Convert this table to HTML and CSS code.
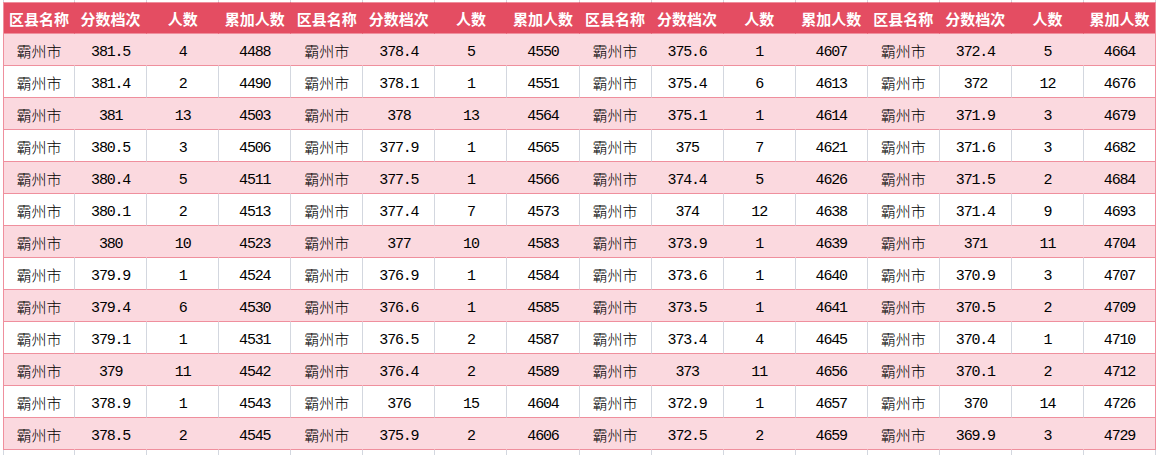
FILE: index.html
```html
<!DOCTYPE html>
<html lang="zh-CN">
<head>
<meta charset="utf-8">
<title>霸州市 分数档次</title>
<link rel="stylesheet" href="styles.css">
</head>
<body>
<table class="sheet">
<colgroup>
<col class="c"><col class="c"><col class="c"><col class="c"><col class="c"><col class="c"><col class="c"><col class="c">
<col class="c"><col class="c"><col class="c"><col class="c"><col class="c"><col class="c"><col class="c"><col class="c">
</colgroup>
<tbody>
<tr class="gap"><td></td><td></td><td></td><td></td><td></td><td></td><td></td><td></td><td></td><td></td><td></td><td></td><td></td><td></td><td></td><td></td></tr>
<tr class="head"><td>区县名称</td><td>分数档次</td><td>人数</td><td>累加人数</td><td>区县名称</td><td>分数档次</td><td>人数</td><td>累加人数</td><td>区县名称</td><td>分数档次</td><td>人数</td><td>累加人数</td><td>区县名称</td><td>分数档次</td><td>人数</td><td>累加人数</td></tr>
<tr class="pink"><td>霸州市</td><td class="n">381.5</td><td class="n">4</td><td class="n">4488</td><td>霸州市</td><td class="n">378.4</td><td class="n">5</td><td class="n">4550</td><td>霸州市</td><td class="n">375.6</td><td class="n">1</td><td class="n">4607</td><td>霸州市</td><td class="n">372.4</td><td class="n">5</td><td class="n">4664</td></tr>
<tr class="white"><td>霸州市</td><td class="n">381.4</td><td class="n">2</td><td class="n">4490</td><td>霸州市</td><td class="n">378.1</td><td class="n">1</td><td class="n">4551</td><td>霸州市</td><td class="n">375.4</td><td class="n">6</td><td class="n">4613</td><td>霸州市</td><td class="n">372</td><td class="n">12</td><td class="n">4676</td></tr>
<tr class="pink"><td>霸州市</td><td class="n">381</td><td class="n">13</td><td class="n">4503</td><td>霸州市</td><td class="n">378</td><td class="n">13</td><td class="n">4564</td><td>霸州市</td><td class="n">375.1</td><td class="n">1</td><td class="n">4614</td><td>霸州市</td><td class="n">371.9</td><td class="n">3</td><td class="n">4679</td></tr>
<tr class="white"><td>霸州市</td><td class="n">380.5</td><td class="n">3</td><td class="n">4506</td><td>霸州市</td><td class="n">377.9</td><td class="n">1</td><td class="n">4565</td><td>霸州市</td><td class="n">375</td><td class="n">7</td><td class="n">4621</td><td>霸州市</td><td class="n">371.6</td><td class="n">3</td><td class="n">4682</td></tr>
<tr class="pink"><td>霸州市</td><td class="n">380.4</td><td class="n">5</td><td class="n">4511</td><td>霸州市</td><td class="n">377.5</td><td class="n">1</td><td class="n">4566</td><td>霸州市</td><td class="n">374.4</td><td class="n">5</td><td class="n">4626</td><td>霸州市</td><td class="n">371.5</td><td class="n">2</td><td class="n">4684</td></tr>
<tr class="white"><td>霸州市</td><td class="n">380.1</td><td class="n">2</td><td class="n">4513</td><td>霸州市</td><td class="n">377.4</td><td class="n">7</td><td class="n">4573</td><td>霸州市</td><td class="n">374</td><td class="n">12</td><td class="n">4638</td><td>霸州市</td><td class="n">371.4</td><td class="n">9</td><td class="n">4693</td></tr>
<tr class="pink"><td>霸州市</td><td class="n">380</td><td class="n">10</td><td class="n">4523</td><td>霸州市</td><td class="n">377</td><td class="n">10</td><td class="n">4583</td><td>霸州市</td><td class="n">373.9</td><td class="n">1</td><td class="n">4639</td><td>霸州市</td><td class="n">371</td><td class="n">11</td><td class="n">4704</td></tr>
<tr class="white"><td>霸州市</td><td class="n">379.9</td><td class="n">1</td><td class="n">4524</td><td>霸州市</td><td class="n">376.9</td><td class="n">1</td><td class="n">4584</td><td>霸州市</td><td class="n">373.6</td><td class="n">1</td><td class="n">4640</td><td>霸州市</td><td class="n">370.9</td><td class="n">3</td><td class="n">4707</td></tr>
<tr class="pink"><td>霸州市</td><td class="n">379.4</td><td class="n">6</td><td class="n">4530</td><td>霸州市</td><td class="n">376.6</td><td class="n">1</td><td class="n">4585</td><td>霸州市</td><td class="n">373.5</td><td class="n">1</td><td class="n">4641</td><td>霸州市</td><td class="n">370.5</td><td class="n">2</td><td class="n">4709</td></tr>
<tr class="white"><td>霸州市</td><td class="n">379.1</td><td class="n">1</td><td class="n">4531</td><td>霸州市</td><td class="n">376.5</td><td class="n">2</td><td class="n">4587</td><td>霸州市</td><td class="n">373.4</td><td class="n">4</td><td class="n">4645</td><td>霸州市</td><td class="n">370.4</td><td class="n">1</td><td class="n">4710</td></tr>
<tr class="pink"><td>霸州市</td><td class="n">379</td><td class="n">11</td><td class="n">4542</td><td>霸州市</td><td class="n">376.4</td><td class="n">2</td><td class="n">4589</td><td>霸州市</td><td class="n">373</td><td class="n">11</td><td class="n">4656</td><td>霸州市</td><td class="n">370.1</td><td class="n">2</td><td class="n">4712</td></tr>
<tr class="white"><td>霸州市</td><td class="n">378.9</td><td class="n">1</td><td class="n">4543</td><td>霸州市</td><td class="n">376</td><td class="n">15</td><td class="n">4604</td><td>霸州市</td><td class="n">372.9</td><td class="n">1</td><td class="n">4657</td><td>霸州市</td><td class="n">370</td><td class="n">14</td><td class="n">4726</td></tr>
<tr class="pink"><td>霸州市</td><td class="n">378.5</td><td class="n">2</td><td class="n">4545</td><td>霸州市</td><td class="n">375.9</td><td class="n">2</td><td class="n">4606</td><td>霸州市</td><td class="n">372.5</td><td class="n">2</td><td class="n">4659</td><td>霸州市</td><td class="n">369.9</td><td class="n">3</td><td class="n">4729</td></tr>
<tr class="gap"><td></td><td></td><td></td><td></td><td></td><td></td><td></td><td></td><td></td><td></td><td></td><td></td><td></td><td></td><td></td><td></td></tr>
</tbody>
</table>
</body>
</html>
```
FILE: styles.css
```css
html, body {
  margin: 0;
  padding: 0;
  background: #ffffff;
  overflow: hidden;
}

.sheet {
  margin-left: 3px;
  border-collapse: separate;
  border-spacing: 0;
  table-layout: fixed;
  width: 1153px;
  font-family: "Noto Sans CJK SC", sans-serif;
  font-size: 15px;
  color: #000000;
}

.sheet .c {
  width: 72px;
}

.sheet td {
  padding: 0;
  text-align: center;
  vertical-align: middle;
  white-space: nowrap;
  overflow: hidden;
  line-height: 18px;
  box-sizing: border-box;
}

.sheet td:first-child {
  border-left: 1px solid #ef8f9d;
}

.gap td {
  height: 2px;
  border-right: 1px solid #d3d7df;
}

.gap td:first-child {
  border-left: 1px solid #d3d7df;
}

.gap:last-child td {
  height: 6px;
}

.head td {
  height: 32px;
  background: #e44d62;
  color: #ffffff;
  font-weight: 700;
  border-top: 1px solid #ef8f9d;
  border-bottom: 1px solid #ef8f9d;
  border-right: 1px solid #e44d62;
  padding-top: 1px;
}

.pink td {
  height: 32px;
  background: #fbd9df;
  border-bottom: 1px solid #ef8f9d;
  border-right: 1px solid #fbd9df;
  padding-top: 2px;
  font-weight: 300;
}

.white td {
  height: 32px;
  background: #ffffff;
  border-bottom: 1px solid #ef8f9d;
  border-right: 1px solid #d3d7df;
  padding-top: 2px;
  font-weight: 300;
}

.head td:last-child,
.pink td:last-child,
.white td:last-child {
  border-right: 1px solid #ef8f9d;
}

.sheet td.n {
  font-family: "Liberation Mono", monospace;
  font-size: 15px;
  font-weight: 400;
  letter-spacing: -1.2px;
  padding-top: 6px;
}
```
